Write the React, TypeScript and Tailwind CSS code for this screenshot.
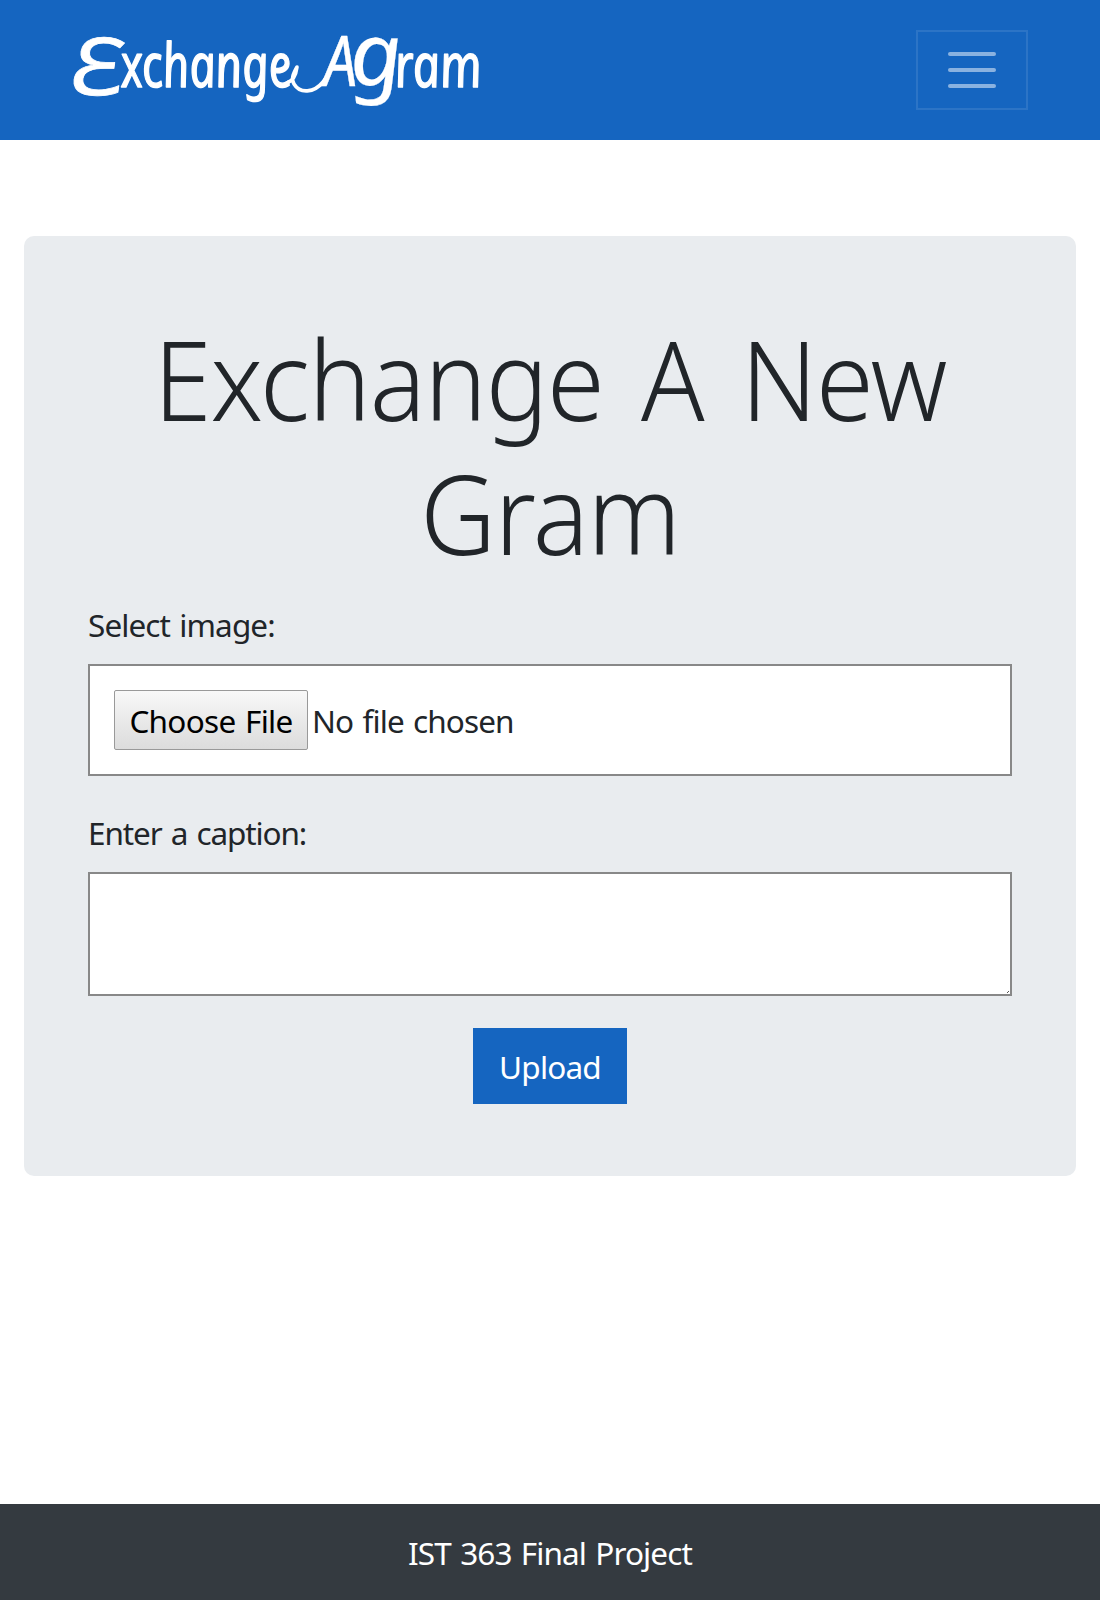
function Logo() {
  return (
    <svg
      role="img"
      aria-label="ExchangeAGram"
      viewBox="0 0 410 140"
      className="h-[140px] w-[410px] overflow-visible"
      fill="#fff"
      stroke="#fff"
      strokeLinejoin="round"
      strokeLinecap="round"
      fontFamily="'Noto Sans', sans-serif"
    >
      <text transform="translate(-4 95) skewX(-8)" fontSize="80" strokeWidth="0.8" textLength="54" lengthAdjust="spacingAndGlyphs">Ɛ</text>
      <text transform="translate(52 87) skewX(8)" fontSize="61" fontStyle="italic" strokeWidth="1.4" textLength="171" lengthAdjust="spacingAndGlyphs">xchange</text>
      <path d="M216 83C222 81 225 75 226 67C222 74 220 79 223 84C229 94 243 93 252 82C256 77 259 72 262 66" fill="none" strokeWidth="3.6" />
      <text transform="translate(253 86) skewX(3)" fontSize="70" fontStyle="italic" strokeWidth="0.4" textLength="34" lengthAdjust="spacingAndGlyphs">A</text>
      <text transform="translate(281 85) skewX(6)" fontSize="87" fontStyle="italic" strokeWidth="0.2" textLength="53" lengthAdjust="spacingAndGlyphs">g</text>
      <text transform="translate(326 87) skewX(8)" fontSize="61" fontStyle="italic" strokeWidth="1.4" textLength="87" lengthAdjust="spacingAndGlyphs">ram</text>
    </svg>
  );
}

export default function App() {
  return (
    <div className="flex h-[1600px] w-[1100px] flex-col bg-white font-['Noto_Sans',sans-serif] text-[31.5px] leading-[48px] tracking-[-0.9px] text-[#212529] [word-spacing:2px]">
      <header className="flex h-[140px] shrink-0 items-center justify-between bg-[#1565c0] pr-[72px] pl-[71px] tracking-normal">
        <Logo />
        <button aria-label="Menu" className="flex h-20 w-28 flex-col items-center justify-center gap-3 border-2 border-white/10">
          <span className="h-1 w-12 rounded-full bg-white/50" />
          <span className="h-1 w-12 rounded-full bg-white/50" />
          <span className="h-1 w-12 rounded-full bg-white/50" />
        </button>
      </header>
      <main className="mx-6 mt-24 h-[940px] rounded-[10px] bg-[#e9ecef] px-16 pt-[75px]">
        <h1 className="h-[268px] scale-x-95 text-center text-[110px] leading-[134px] font-[270] tracking-[-1.2px] [word-spacing:12px]">
          Exchange A New
          <br />
          Gram
        </h1>
        <div className="mt-[22px] h-12">Select image:</div>
        <div className="mt-[15px] flex h-28 items-center border-2 border-[#888] bg-white px-6">
          <button className="h-[60px] w-[194px] rounded-[2px] border border-[#999] bg-linear-to-b from-[#f8f8f8] to-[#dcdcdc] pt-0.5 tracking-[-0.7px] text-black [word-spacing:2px]">
            Choose File
          </button>
          <span className="ml-1 pt-0.5">No file chosen</span>
        </div>
        <div className="mt-[33px] h-12 tracking-[-1.1px]">Enter a caption:</div>
        <div className="relative mt-[15px] h-[124px]">
          <textarea aria-label="Caption" className="block h-full w-full resize-none border-2 border-[#888] bg-white" />
          <svg viewBox="0 0 2 2" className="absolute right-[3px] bottom-[3px] size-[2px]" fill="#555">
            <path d="M1 0h1v1h-1zM0 1h1v1h-1z" />
          </svg>
        </div>
        <button className="mx-auto mt-8 block h-[76px] w-[154px] bg-[#1565c0] pt-0.5 tracking-[-0.8px] text-white">Upload</button>
      </main>
      <footer className="mt-auto flex h-24 items-center justify-center bg-[#343a40] pt-0.5 text-white">
        IST 363 Final Project
      </footer>
    </div>
  );
}
